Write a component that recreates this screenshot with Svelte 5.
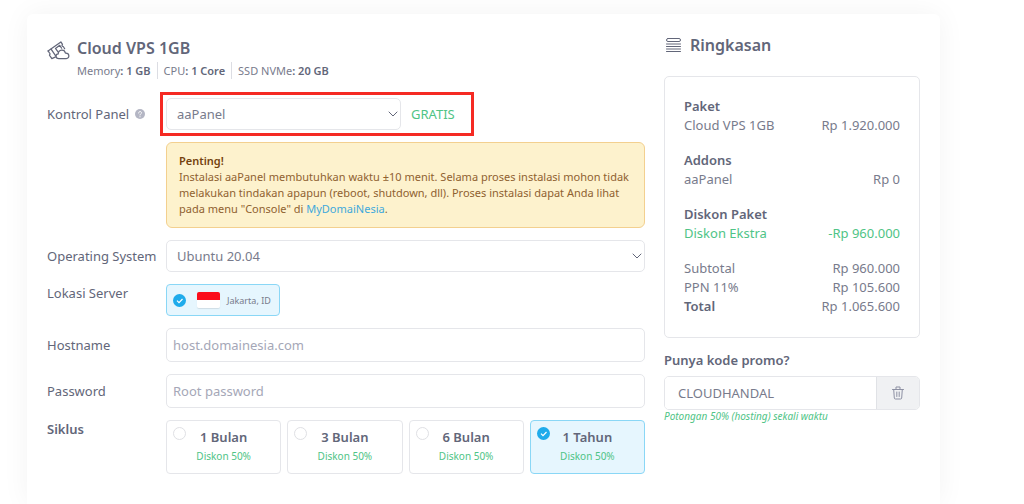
<script>
	let panel = $state('aaPanel');
	let os = $state('Ubuntu 20.04');
	let hostname = $state('');
	let password = $state('');
	let promo = $state('CLOUDHANDAL');
	let location = $state('Jakarta, ID');
	let cycle = $state('1 Tahun');

	const specs = [
		{ name: 'Memory', value: '1 GB' },
		{ name: 'CPU', value: '1 Core' },
		{ name: 'SSD NVMe', value: '20 GB' }
	];

	const cycles = ['1 Bulan', '3 Bulan', '6 Bulan', '1 Tahun'];

	const groups = [
		{ title: 'Paket', rows: [{ name: 'Cloud VPS 1GB', price: 'Rp 1.920.000' }] },
		{ title: 'Addons', rows: [{ name: 'aaPanel', price: 'Rp 0' }] },
		{ title: 'Diskon Paket', discount: true, rows: [{ name: 'Diskon Ekstra', price: '-Rp 960.000' }] }
	];
</script>

{#snippet chevron()}
	<svg class="chevron" viewBox="0 0 10 6" aria-hidden="true">
		<path d="M1 1l4 4 4-4" />
	</svg>
{/snippet}

<div class="page">
	<main class="card">
		<form class="order">
			<header class="product">
				<svg class="product-icon" viewBox="0 0 24 20" aria-hidden="true">
					<path d="M1 10.500L14.500 1l1.700 2.500c-1 1-.4 2.200.8 2.300l1.500 2.400" />
					<path d="M1 10.500l1.300 1.800c1 .5.9 1.800.2 2.500l2.500 3.700 3.500-1.500" />
					<path d="M4.200 8.500l5 7.500" />
					<path d="M11.500 11.500L8.800 7.800l4.500-3.200 2 3" />
					<path d="M12.300 18.500c-3.800 0-3.900-4.600-.6-4.900.3-4.900 6.500-5.300 7.600-.9 4.600-.3 4.700 5.800.9 5.800z" />
				</svg>
				<div>
					<h1>Cloud VPS 1GB</h1>
					<ul class="specs">
						{#each specs as spec}
							<li>{spec.name}<b>: {spec.value}</b></li>
						{/each}
					</ul>
				</div>
			</header>

			<div class="row">
				<div class="name">
					<label for="panel">Kontrol Panel</label>
					<svg class="help" viewBox="0 0 10 10" aria-hidden="true">
						<circle cx="5" cy="5" r="5" />
						<path d="M3.600 4c0-2 2.900-1.900 2.900-.2C6.500 4.900 5 4.800 5 6M5 7.600v.3" />
					</svg>
				</div>
				<div class="highlight">
					<div class="select">
						<select id="panel" bind:value={panel}>
							<option>aaPanel</option>
						</select>
						{@render chevron()}
					</div>
					<span class="free">GRATIS</span>
				</div>
			</div>

			<div class="row">
				<p class="alert">
					<strong>Penting!</strong><br />
					Instalasi aaPanel membutuhkan waktu ±10 menit. Selama proses instalasi mohon tidak
					melakukan tindakan apapun (reboot, shutdown, dll). Proses instalasi dapat Anda lihat
					pada menu "Console" di <a href="#console">MyDomaiNesia</a>.
				</p>
			</div>

			<div class="row">
				<label class="name" for="os">Operating System</label>
				<div class="select">
					<select id="os" bind:value={os}>
						<option>Ubuntu 20.04</option>
					</select>
					{@render chevron()}
				</div>
			</div>

			<div class="row top">
				<span class="name" id="location">Lokasi Server</span>
				<div role="radiogroup" aria-labelledby="location">
					<label class="option location">
						<input type="radio" name="location" value="Jakarta, ID" bind:group={location} />
						<span class="flag"></span>
						Jakarta, ID
					</label>
				</div>
			</div>

			<div class="row">
				<label class="name" for="hostname">Hostname</label>
				<input class="text" id="hostname" placeholder="host.domainesia.com" bind:value={hostname} />
			</div>

			<div class="row">
				<label class="name" for="password">Password</label>
				<input class="text" id="password" type="password" placeholder="Root password" bind:value={password} />
			</div>

			<div class="row top">
				<span class="name bold" id="cycle">Siklus</span>
				<div class="cycles" role="radiogroup" aria-labelledby="cycle">
					{#each cycles as item}
						<label class="option cycle">
							<input type="radio" name="cycle" value={item} bind:group={cycle} />
							<span class="cycle-text">
								<b>{item}</b>
								<small>Diskon 50%</small>
							</span>
						</label>
					{/each}
				</div>
			</div>
		</form>

		<aside>
			<h2>
				<svg class="list-icon" viewBox="0 0 15 14" aria-hidden="true">
					<rect x=".5" y=".5" width="14" height="3" rx="1.500" />
					<path d="M.5 6h14M.5 8.500h14M.5 11h14M.5 13.500h14" />
				</svg>
				Ringkasan
			</h2>

			<div class="summary">
				<table>
					{#each groups as group}
						<tbody class:discount={group.discount}>
							<tr><th colspan="2">{group.title}</th></tr>
							{#each group.rows as row}
								<tr><td>{row.name}</td><td>{row.price}</td></tr>
							{/each}
						</tbody>
					{/each}
					<tbody>
						<tr><td>Subtotal</td><td>Rp 960.000</td></tr>
						<tr><td>PPN 11%</td><td>Rp 105.600</td></tr>
						<tr><th>Total</th><td>Rp 1.065.600</td></tr>
					</tbody>
				</table>
			</div>

			<label class="promo-label" for="promo">Punya kode promo?</label>
			<div class="promo">
				<input id="promo" bind:value={promo} />
				<button type="button" aria-label="Hapus kode promo" onclick={() => (promo = '')}>
					<svg viewBox="0 0 12 14" aria-hidden="true">
						<path d="M.5 3.500h11M4 3.500V1h4v2.500M1.700 3.500l.6 8.500q.1 1 1.100 1h5.200q1 0 1.100-1l.6-8.500M4.800 6v4.500M7.200 6v4.500" />
					</svg>
				</button>
			</div>
			<p class="promo-note">Potongan 50% (hosting) sekali waktu</p>
		</aside>
	</main>
</div>

<style>
	:global(body) {
		margin: 0;
		background: #fff;
	}
	* {
		box-sizing: border-box;
	}
	.page {
		display: flex;
		min-height: 100vh;
		padding: 14px 84px 0 27px;
		overflow: hidden;
		font-family: 'Noto Sans', 'Open Sans', sans-serif;
		font-size: 13px;
		line-height: 19px;
		color: #626679;
	}
	.card {
		flex: 1;
		display: grid;
		grid-template-columns: minmax(0, 1fr) 256px;
		align-items: start;
		gap: 19px;
		padding: 20px 20px 24px;
		border-radius: 6px 6px 0 0;
		box-shadow: 0 0 28px rgba(0, 0, 0, 0.05);
	}
	input,
	select,
	button {
		font: inherit;
		color: inherit;
		margin: 0;
	}
	b,
	strong,
	th,
	.bold {
		font-weight: 600;
	}
	svg {
		fill: none;
		stroke: currentColor;
		stroke-linecap: round;
		stroke-linejoin: round;
	}

	.order {
		display: flex;
		flex-direction: column;
		gap: 12px;
	}
	.product {
		display: flex;
		gap: 7px;
		height: 52px;
	}
	.product-icon {
		width: 23px;
		height: 19px;
		margin-top: 7px;
		stroke-width: 1.3;
	}
	h1,
	h2 {
		margin: 0;
		font-size: 16px;
		font-weight: 600;
		line-height: 28px;
	}
	.specs {
		display: flex;
		margin: 0;
		padding: 0;
		list-style: none;
		font-size: 11px;
		line-height: 17px;
		color: #787b8c;
	}
	.specs li + li {
		margin-left: 6px;
		padding-left: 6px;
		border-left: 1px solid #dcdde3;
	}
	.specs b {
		color: #626679;
	}

	.row {
		display: grid;
		grid-template-columns: 119px minmax(0, 1fr);
		align-items: center;
	}
	.row.top {
		align-items: start;
	}
	.name {
		display: flex;
		align-items: center;
		gap: 6px;
		white-space: nowrap;
	}
	.help {
		width: 10px;
		height: 10px;
		color: #fff;
	}
	.help circle {
		fill: #b4b6c4;
		stroke: none;
	}
	.highlight {
		display: flex;
		align-items: center;
		gap: 10px;
		width: 302px;
		outline: 3px solid #f52a23;
		outline-offset: 3px;
	}
	.highlight .select {
		width: 235px;
	}
	.free,
	small,
	.discount td,
	.promo-note {
		color: #4fc486;
	}
	.select {
		display: grid;
		align-items: center;
	}
	.select select {
		grid-area: 1 / 1;
		width: 100%;
		height: 32px;
		padding: 0 24px 0 10px;
		border: 1px solid #e5e6ea;
		border-radius: 5px;
		background: #fff;
		color: #787b8c;
		appearance: none;
	}
	.chevron {
		grid-area: 1 / 1;
		justify-self: end;
		width: 10px;
		height: 6px;
		margin-right: 3px;
		pointer-events: none;
	}
	.alert {
		grid-column: 2;
		margin: 0;
		padding: 10px 12px;
		border: 1px solid #f3d08f;
		border-radius: 6px;
		background: #fdf2cd;
		color: #8f6130;
		font-size: 11px;
		line-height: 16px;
	}
	.alert strong {
		color: #74420f;
	}
	a {
		color: #3fa9dc;
		text-decoration: none;
	}
	.text {
		width: 100%;
		height: 34px;
		padding: 0 6px;
		border: 1px solid #e5e6ea;
		border-radius: 5px;
		background: #fff;
	}
	.text::placeholder {
		color: #a5a7b7;
		opacity: 1;
	}

	.option {
		border: 1px solid #e5e6ea;
		border-radius: 4px;
	}
	.option:has(:checked) {
		border-color: #8ad7f6;
		background: #e6f6fe;
	}
	.option input {
		width: 13px;
		height: 13px;
		border: 1px solid #dfe0e4;
		border-radius: 50%;
		background: #fff;
		appearance: none;
	}
	.option input:checked {
		border: 0;
		background: #1fabeb url("data:image/svg+xml,%3Csvg xmlns='http://www.w3.org/2000/svg' viewBox='0 0 13 13'%3E%3Cpath d='M4 6.600l2 2 3.500-3.600' fill='none' stroke='white' stroke-width='1.200'/%3E%3C/svg%3E");
	}
	.location {
		display: inline-flex;
		align-items: center;
		height: 32px;
		padding: 0 8px 0 6px;
		font-size: 9px;
		color: #787b8c;
		vertical-align: top;
	}
	.flag {
		width: 23px;
		height: 16px;
		margin: 0 7px 0 11px;
		border-radius: 2px;
		background: linear-gradient(#fb0d1b 50%, #fff 50%);
		box-shadow: 0 1px 1px rgba(0, 0, 0, 0.1);
	}
	.cycles {
		display: grid;
		grid-template-columns: repeat(4, 1fr);
		gap: 6px;
	}
	.cycle {
		display: grid;
		height: 54px;
		padding: 6px;
	}
	.cycle input,
	.cycle-text {
		grid-area: 1 / 1;
	}
	.cycle-text {
		display: flex;
		flex-direction: column;
		justify-content: center;
		text-align: center;
	}
	small {
		font-size: 10px;
	}

	aside {
		padding-top: 1px;
	}
	h2 {
		display: flex;
		align-items: center;
		gap: 9px;
		padding-left: 2px;
		margin-top: -4px;
	}
	.list-icon {
		width: 15px;
		height: 14px;
	}
	.summary {
		margin: 17px 0 13px;
		padding: 20px 19px 21px;
		border: 1px solid #e5e6ea;
		border-radius: 5px;
	}
	table {
		width: 100%;
		border-collapse: collapse;
	}
	th,
	td {
		padding: 0;
		text-align: left;
	}
	td {
		color: #787b8c;
	}
	td:last-child {
		text-align: right;
	}
	tbody + tbody tr:first-child > * {
		padding-top: 16px;
	}
	.promo-label {
		display: block;
		font-weight: 600;
	}
	.promo {
		display: flex;
		height: 34px;
		margin-top: 6px;
		border: 1px solid #e5e6ea;
		border-radius: 5px;
		overflow: hidden;
	}
	.promo input {
		flex: 1;
		min-width: 0;
		padding: 0 13px;
		border: 0;
		color: #787b8c;
	}
	.promo button {
		width: 43px;
		padding: 0;
		border: 0;
		border-left: 1px solid #e0e2e6;
		background: #f0f1f3;
		color: #8d90a3;
	}
	.promo svg {
		display: block;
		width: 12px;
		height: 14px;
		margin: 0 auto;
	}
	.promo-note {
		margin: 0;
		font-size: 10px;
		font-style: italic;
		line-height: 13px;
	}
</style>
